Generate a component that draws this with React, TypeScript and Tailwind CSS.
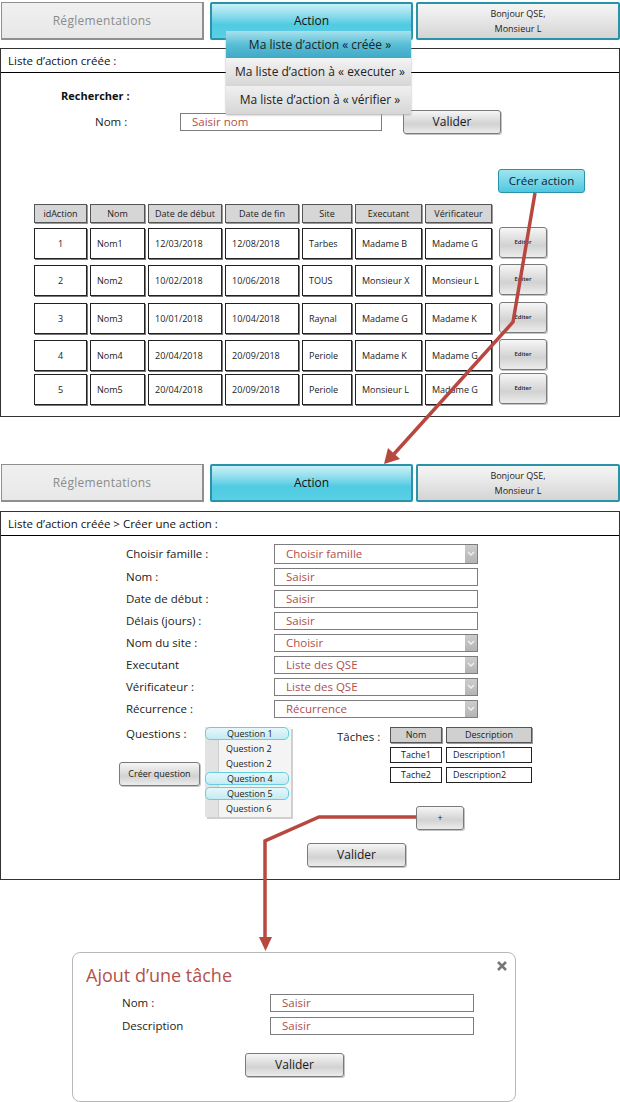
import React from "react";

const gray = "border border-[#7a7a7a] rounded-[3px] bg-gradient-to-b from-[#f6f6f6] via-[#d2d2d2] via-60% to-[#ececec] shadow-[1px_1px_0_#c4c4c4] flex items-center justify-center text-[#1a1a1a]";

function Btn({ w, h = 24, size = 12, label, cls = "" }: { w: number; h?: number; size?: number; label: string; cls?: string }) {
  return (
    <div className={`${gray} ${cls} shrink-0`} style={{ width: w, height: h, fontSize: size }}>
      {label}
    </div>
  );
}

function Nav() {
  return (
    <div className="flex h-[38px] items-stretch">
      <div className="ml-px w-[203px] border border-b-2 border-r-2 border-[#8f8f8f] bg-gradient-to-b from-[#f0f0f0] to-[#e8e8e8] flex items-center justify-center text-[12px] tracking-[0.3px] text-[#8b8b8b]">
        Réglementations
      </div>
      <div className="ml-[6px] w-[203px] h-[38px] border-2 border-[#2b93a8] rounded-[2px] bg-gradient-to-b from-[#c9f1f8] via-[#50cbe2] via-60% to-[#58d0e5] flex items-center justify-center text-[12px] text-[#111]">
        Action
      </div>
      <div className="ml-[3px] w-[204px] border-2 border-[#2b93a8] rounded-[2px] bg-gradient-to-b from-[#f5f5f5] via-[#e6e6e6] via-50% to-[#d4d4d4] flex flex-col items-center justify-center text-[9px] leading-[15px] text-[#222]">
        <span>Bonjour QSE,</span>
        <span>Monsieur L</span>
      </div>
    </div>
  );
}

function Dropdown() {
  return (
    <div className="absolute left-[226px] top-[31px] w-[185px] text-[12px] text-[#222] shadow-[0_1px_2px_#aaa] z-10">
      <div className="h-[27px] pl-[3px] flex items-center justify-center bg-gradient-to-b from-[#a5e2ee] via-[#58bed6] to-[#3fa9c6]">Ma liste d’action « créée »</div>
      <div className="h-[28px] pl-[3px] flex items-center justify-center bg-gradient-to-b from-[#f4f4f4] to-[#d6d6d6]">Ma liste d’action à « executer »</div>
      <div className="h-[28px] pl-[3px] flex items-center justify-center bg-gradient-to-b from-[#f0f0f0] to-[#d6d6d6]">Ma liste d’action à « vérifier »</div>
    </div>
  );
}

function Head({ text }: { text: string }) {
  return (
    <div className="h-[24px] border-b border-black flex items-center pl-[7px] pt-px text-[11.500px] text-[#111]">{text}</div>
  );
}

const heads = ["idAction", "Nom", "Date de début", "Date de fin", "Site", "Executant", "Vérificateur"];
const rows = [
  { mt: "mt-[5px]", c: ["1", "Nom1", "12/03/2018", "12/08/2018", "Tarbes", "Madame B", "Madame G"] },
  { mt: "mt-[6px]", c: ["2", "Nom2", "10/02/2018", "10/06/2018", "TOUS", "Monsieur X", "Monsieur L"] },
  { mt: "mt-[7px]", c: ["3", "Nom3", "10/01/2018", "10/04/2018", "Raynal", "Madame G", "Madame K"] },
  { mt: "mt-[6px]", c: ["4", "Nom4", "20/04/2018", "20/09/2018", "Periole", "Madame K", "Madame G"] },
  { mt: "mt-[3px]", c: ["5", "Nom5", "20/04/2018", "20/09/2018", "Periole", "Monsieur L", "Madame G"] },
];
const grid = "grid grid-cols-[53px_55px_74px_74px_50px_67px_67px] gap-x-[3px]";

function ActionTable() {
  return (
    <div className="ml-[33px] mt-[11px] text-[9px] text-[#222]">
      <div className={`${grid} h-[19px]`}>
        {heads.map((t) => (
          <div key={t} className="border border-[#555] bg-[#d6d6d6] shadow-[1px_1px_0_#999] flex items-center justify-center">{t}</div>
        ))}
      </div>
      {rows.map((r) => (
        <div key={r.c[0]} className={`flex ${r.mt}`}>
          <div className={`${grid} h-[31px]`}>
            {r.c.map((t, i) => (
              <div key={i} className={`border border-[#222] shadow-[1px_1px_0_#777] bg-white flex items-center ${i === 0 ? "justify-center" : "pl-[6px]"}`}>{t}</div>
            ))}
          </div>
          <Btn w={48} h={31} size={6} label="Editer" cls="ml-[7px] -mt-px font-semibold" />
        </div>
      ))}
    </div>
  );
}

function Input({ text, w = 204, h = 18, select = false, pad = 11 }: { text: string; w?: number; h?: number; select?: boolean; pad?: number }) {
  return (
    <div className="border border-[#7d7d7d] bg-white flex items-center text-[11.500px] text-[#b0504a] relative shrink-0" style={{ width: w, height: h, paddingLeft: pad }}>
      {text}
      {select && (
        <span className="absolute right-0 top-0 bottom-0 w-[12px] bg-gradient-to-b from-[#cdcdcd] to-[#b4b4b4] flex items-center justify-center">
          <svg width="8" height="6" viewBox="0 0 8 6"><path d="M1 1l3 3 3-3" fill="none" stroke="#f0f0f0" strokeWidth="1.500" /></svg>
        </span>
      )}
    </div>
  );
}

function FormRow({ label, text, select, h = 18 }: { label: string; text: string; select?: boolean; h?: number }) {
  return (
    <div className="flex items-center text-[11.500px] text-[#222]" style={{ height: h }}>
      <div className="ml-[125px] w-[148px]">{label}</div>
      <Input text={text} h={h} select={select} />
    </div>
  );
}

const questions = [
  { t: "Question 1", on: true },
  { t: "Question 2", on: false },
  { t: "Question 2", on: false },
  { t: "Question 4", on: true },
  { t: "Question 5", on: true },
  { t: "Question 6", on: false },
];

function QuestionList() {
  return (
    <div className="ml-[6px] w-[86px] h-[90px] bg-[#f4f4f4] shadow-[2px_2px_0_#cfcfcf] flex flex-col text-[9px] text-[#222] relative shrink-0">
      <div className="absolute left-0 top-0 bottom-0 w-[14px] bg-[#e2e2e2] border-r border-[#cfcfcf]" />
      {questions.map((q, i) => (
        <div key={i} className={`relative h-[13px] mb-[2px] flex items-center pl-[21px] ${q.on ? "w-[84px] rounded-[5px] border border-[#63cfe0] bg-gradient-to-b from-[#e6f7fb] to-[#c4ebf3]" : ""}`}>
          {q.t}
        </div>
      ))}
    </div>
  );
}

function Tasks() {
  const box = "border border-[#222] bg-white flex items-center";
  const hd = "border border-[#555] bg-[#d0d0d0] shadow-[1px_1px_0_#999] flex items-center justify-center";
  return (
    <div className="grid grid-cols-[52px_86px] gap-x-[4px] gap-y-[4px] text-[9px] text-[#222] auto-rows-[16px]">
      <div className={hd}>Nom</div>
      <div className={hd}>Description</div>
      <div className={`${box} justify-center`}>Tache1</div>
      <div className={`${box} pl-[6px]`}>Description1</div>
      <div className={`${box} justify-center`}>Tache2</div>
      <div className={`${box} pl-[6px]`}>Description2</div>
    </div>
  );
}

function Arrows() {
  return (
    <svg className="absolute inset-0 z-20 pointer-events-none" width="620" height="1102" viewBox="0 0 620 1102">
      <polyline points="535,193 513,322 394,454" fill="none" stroke="#b8483f" strokeWidth="3.500" />
      <polygon points="384,464 388,448 400,459" fill="#b8483f" />
      <polyline points="416,817 319,817 265,841 265,940" fill="none" stroke="#b8483f" strokeWidth="3.500" />
      <polygon points="259,937 272,937 265.500,951" fill="#b8483f" />
    </svg>
  );
}

export default function App() {
  return (
    <div className="relative w-[620px] h-[1102px] bg-white pt-[2px] overflow-hidden" style={{ fontFamily: '"Open Sans", "Noto Sans", sans-serif' }}>
      <Nav />
      <Dropdown />
      <Arrows />

      <div className="mt-[8px] h-[369px] border border-[#333]">
        <Head text="Liste d’action créée :" />
        <div className="ml-[60px] mt-[15px] h-[16px] flex items-center text-[11px] font-bold text-[#111]">Rechercher :</div>
        <div className="mt-[6px] flex items-center text-[11.500px] text-[#222] h-[24px]">
          <div className="ml-[94px] w-[85px]">Nom :</div>
          <Input text="Saisir nom" w={202} pad={11} />
          <Btn w={98} label="Valider" cls="ml-[21px]" />
        </div>
        <div className="mt-[35px] flex justify-end pr-[34px]">
          <div className="w-[87px] h-[24px] rounded-[3px] border border-[#2b93a8] bg-gradient-to-b from-[#9de5f0] to-[#4cc8e0] flex items-center justify-center text-[11.500px] text-[#123]">Créer action</div>
        </div>
        <ActionTable />
      </div>

      <div className="mt-[47px]">
        <Nav />
      </div>

      <div className="mt-[9px] h-[369px] border border-[#333]">
        <Head text="Liste d’action créée > Créer une action :" />
        <div className="mt-[8px] flex flex-col gap-[4px]">
          <FormRow label="Choisir famille :" text="Choisir famille" select h={20} />
          <FormRow label="Nom :" text="Saisir" />
          <FormRow label="Date de début :" text="Saisir" />
          <FormRow label="Délais (jours) :" text="Saisir" />
          <FormRow label="Nom du site :" text="Choisir" select />
          <FormRow label="Executant" text="Liste des QSE" select />
          <FormRow label="Vérificateur :" text="Liste des QSE" select />
          <FormRow label="Récurrence :" text="Récurrence" select />
        </div>
        <div className="mt-[9px] flex items-start">
          <div className="ml-[118px] w-[80px]">
            <div className="ml-[7px] h-[16px] text-[11.500px] text-[#222] whitespace-nowrap flex items-center -mt-px">Questions :</div>
            <Btn w={81} size={9} label="Créer question" cls="mt-[20px]" />
          </div>
          <QuestionList />
          <div className="ml-[46px] flex flex-col">
            <div className="flex items-start">
              <div className="w-[53px] mt-px text-[11.500px] text-[#222]">Tâches :</div>
              <Tasks />
            </div>
            <Btn w={48} size={9} label="+" cls="ml-[79px] mt-[23px]" />
          </div>
        </div>
        <div className="mt-[13px] ml-[306px]">
          <Btn w={99} label="Valider" />
        </div>
      </div>

      <div className="mt-[72px] ml-[72px] w-[444px] h-[150px] border border-[#b8b8b8] rounded-[8px] bg-white relative">
        <div className="ml-[13px] mt-[10px] h-[24px] flex items-center text-[18px] text-[#b5504a]">Ajout d’une tâche</div>
        <div className="absolute right-[7px] top-[7px]">
          <svg width="12" height="12" viewBox="0 0 12 12"><path d="M2 2l8 8M10 2l-8 8" stroke="#777" strokeWidth="2.500" fill="none" /></svg>
        </div>
        <div className="mt-[7px] flex items-center h-[18px] text-[11.500px] text-[#222]">
          <div className="ml-[49px] w-[148px]">Nom :</div>
          <Input text="Saisir" h={18} />
        </div>
        <div className="mt-[5px] flex items-center h-[18px] text-[11.500px] text-[#222]">
          <div className="ml-[49px] w-[148px]">Description</div>
          <Input text="Saisir" h={18} />
        </div>
        <div className="mt-[18px] ml-[172px]">
          <Btn w={99} label="Valider" />
        </div>
      </div>
    </div>
  );
}
